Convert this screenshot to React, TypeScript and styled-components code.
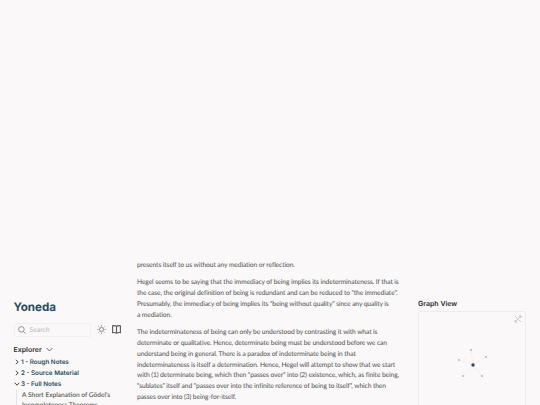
import { createGlobalStyle } from "styled-components";
import styled from "styled-components";

const Global = createGlobalStyle`
  html, body {
    margin: 0;
    height: 405px;
    overflow: hidden;
    background: #faf8f8;
  }
`;

const Page = styled.div`
  display: grid;
  grid-template-columns: 137px 262px 141px;
  width: 540px;
  height: 405px;
  overflow: hidden;
  background: #faf8f8;
  font-family: "Lato", "Liberation Sans", sans-serif;
  text-rendering: geometricPrecision;
`;

const Left = styled.aside`
  display: flex;
  flex-direction: column;
  padding: 299.5px 0 0 13.5px;
  box-sizing: border-box;
`;

const Title = styled.h1`
  margin: 0;
  font-family: "Inter", "Liberation Sans", sans-serif;
  font-size: 11.6px;
  line-height: 15px;
  font-weight: 700;
  color: #284b63;
`;

const SearchRow = styled.div`
  display: flex;
  align-items: center;
  margin-top: 8px;
`;

const SearchBox = styled.div`
  display: flex;
  align-items: center;
  gap: 4px;
  width: 77px;
  height: 14px;
  box-sizing: border-box;
  padding-left: 3px;
  border: 1px solid #f0eeee;
  border-radius: 2px;
  font-size: 6.8px;
  color: #b8b8b8;
`;

const IconButton = styled.div`
  display: flex;
  margin-left: 6px;
  color: #4e4e4e;
`;

const ExplorerHead = styled.div`
  display: flex;
  align-items: center;
  gap: 4px;
  margin-top: 7px;
  font-family: "Inter", "Liberation Sans", sans-serif;
  font-size: 7px;
  line-height: 11px;
  font-weight: 600;
  color: #2b2b2b;
`;

const Tree = styled.ul`
  list-style: none;
  margin: 2px 0 0;
  padding: 0;
`;

const Folder = styled.li`
  display: flex;
  align-items: center;
  gap: 1.5px;
  height: 11px;
  font-family: "Inter", "Liberation Sans", sans-serif;
  font-size: 6.3px;
  font-weight: 600;
  color: #284b63;
`;

const Files = styled.ul`
  list-style: none;
  margin: 0 0 0 2.5px;
  padding: 0 0 0 5px;
  border-left: 1px solid #e5e5e5;
  width: 95px;
`;

const FileItem = styled.li`
  font-size: 6.6px;
  line-height: 10px;
  font-weight: 500;
  color: #4e4e4e;
`;

const Center = styled.main`
  padding-top: 259.5px;
`;

const Para = styled.p`
  margin: 0 0 7px;
  font-family: "Lato", "Liberation Sans", sans-serif;
  font-size: 6.7px;
  letter-spacing: -0.1px;
  line-height: 10.75px;
  color: #4e4e4e;
  white-space: nowrap;
`;

const Right = styled.aside`
  padding: 298px 0 0 19px;
`;

const GraphTitle = styled.h3`
  margin: 0;
  font-family: "Inter", "Liberation Sans", sans-serif;
  font-size: 7px;
  line-height: 11px;
  font-weight: 600;
  color: #2b2b2b;
`;

const GraphBox = styled.div`
  position: relative;
  width: 108px;
  height: 120px;
  margin-top: 2px;
  border: 1px solid #eeecec;
  border-radius: 2px;
  box-sizing: border-box;
`;

const GraphIcon = styled.svg`
  position: absolute;
  top: 3px;
  right: 3px;
`;

const Chevron = ({ open }: { open?: boolean }) => (
  <svg width="6" height="6" viewBox="0 0 6 6" fill="none" stroke="#333" strokeWidth="0.9">
    {open ? <path d="M0.8 1.8 3 4.2 5.2 1.8" /> : <path d="M1.8 0.8 4.2 3 1.8 5.2" />}
  </svg>
);

const edges = [
  [52, 38],
  [40, 48],
  [67, 45],
  [44, 64],
  [63, 64],
];

export default function App() {
  return (
    <>
      <Global />
      <Page>
        <Left>
          <Title>Yoneda</Title>
          <SearchRow>
            <SearchBox>
              <svg width="8" height="8" viewBox="0 0 8 8" fill="none" stroke="#666" strokeWidth="0.7">
                <circle cx="3.4" cy="3.4" r="2.8" />
                <path d="M5.4 5.4 7.6 7.6" />
              </svg>
              Search
            </SearchBox>
            <IconButton>
              <svg width="9" height="9" viewBox="0 0 9 9" fill="none" stroke="#4e4e4e" strokeWidth="0.6">
                <circle cx="4.5" cy="4.5" r="2" />
                <path d="M4.5 0.2v1.3M4.5 7.5v1.3M0.2 4.5h1.3M7.5 4.5h1.3M1.5 1.5l.9.9M6.6 6.6l.9.9M1.5 7.5l.9-.9M6.6 2.4l.9-.9" />
              </svg>
            </IconButton>
            <IconButton>
              <svg width="9" height="9" viewBox="0 0 9 9" fill="none" stroke="#5a5a5a" strokeWidth="1.1">
                <path d="M4.5 1.2C3.6.7 2 .6.6.7v6.9c1.4-.1 3 0 3.9.6.9-.6 2.5-.7 3.9-.6V.7C7 .6 5.4.7 4.5 1.2zM4.5 1.2v7" />
              </svg>
            </IconButton>
          </SearchRow>
          <ExplorerHead>
            Explorer
            <svg width="7" height="5" viewBox="0 0 7 5" fill="none" stroke="#333" strokeWidth="0.7">
              <path d="M0.6 1 3.5 4 6.4 1" />
            </svg>
          </ExplorerHead>
          <Tree>
            <Folder>
              <Chevron />1 - Rough Notes
            </Folder>
            <Folder>
              <Chevron />2 - Source Material
            </Folder>
            <Folder>
              <Chevron open />3 - Full Notes
            </Folder>
          </Tree>
          <Files>
            <FileItem>A Short Explanation of Gödel's Incompleteness Theorems</FileItem>
          </Files>
        </Left>
        <Center>
          <Para>presents itself to us without any mediation or reflection.</Para>
          <Para>
            Hegel seems to be saying that the immediacy of being implies its indeterminateness. If that is
            <br />
            the case, the original definition of being is redundant and can be reduced to “the immediate”.
            <br />
            Presumably, the immediacy of being implies its “being without quality” since any quality is
            <br />a mediation.
          </Para>
          <Para>
            The indeterminateness of being can only be understood by contrasting it with what is
            <br />
            determinate or qualitative. Hence, determinate being must be understood before we can
            <br />
            understand being in general. There is a paradox of indeterminate being in that
            <br />
            indeterminateness is itself a determination. Hence, Hegel will attempt to show that we start
            <br />
            with (1) determinate being, which then “passes over” into (2) existence, which, as finite being,
            <br />
            “sublates” itself and “passes over into the infinite reference of being to itself”, which then
            <br />
            passes over into (3) being-for-itself.
          </Para>
        </Center>
        <Right>
          <GraphTitle>Graph View</GraphTitle>
          <GraphBox>
            <GraphIcon width="8" height="8" viewBox="0 0 8 8" fill="none" stroke="#bdbdbd" strokeWidth="0.8">
              <path d="M1 7 7 1M5 1h2v2M1 5v2h2M1 1l2.4 2.4M4.6 4.6 7 7" />
            </GraphIcon>
            <svg width="106" height="118" viewBox="0 0 106 118">
              {edges.map(([x, y]) => (
                <line key={x} x1="54" y1="53" x2={x} y2={y} stroke="#e8e6e6" strokeWidth="0.5" />
              ))}
              {edges.map(([x, y]) => (
                <circle key={x} cx={x} cy={y} r="1" fill="#b4b4b4" />
              ))}
              <circle cx="54" cy="53" r="1.7" fill="#284b63" />
            </svg>
          </GraphBox>
        </Right>
      </Page>
    </>
  );
}
